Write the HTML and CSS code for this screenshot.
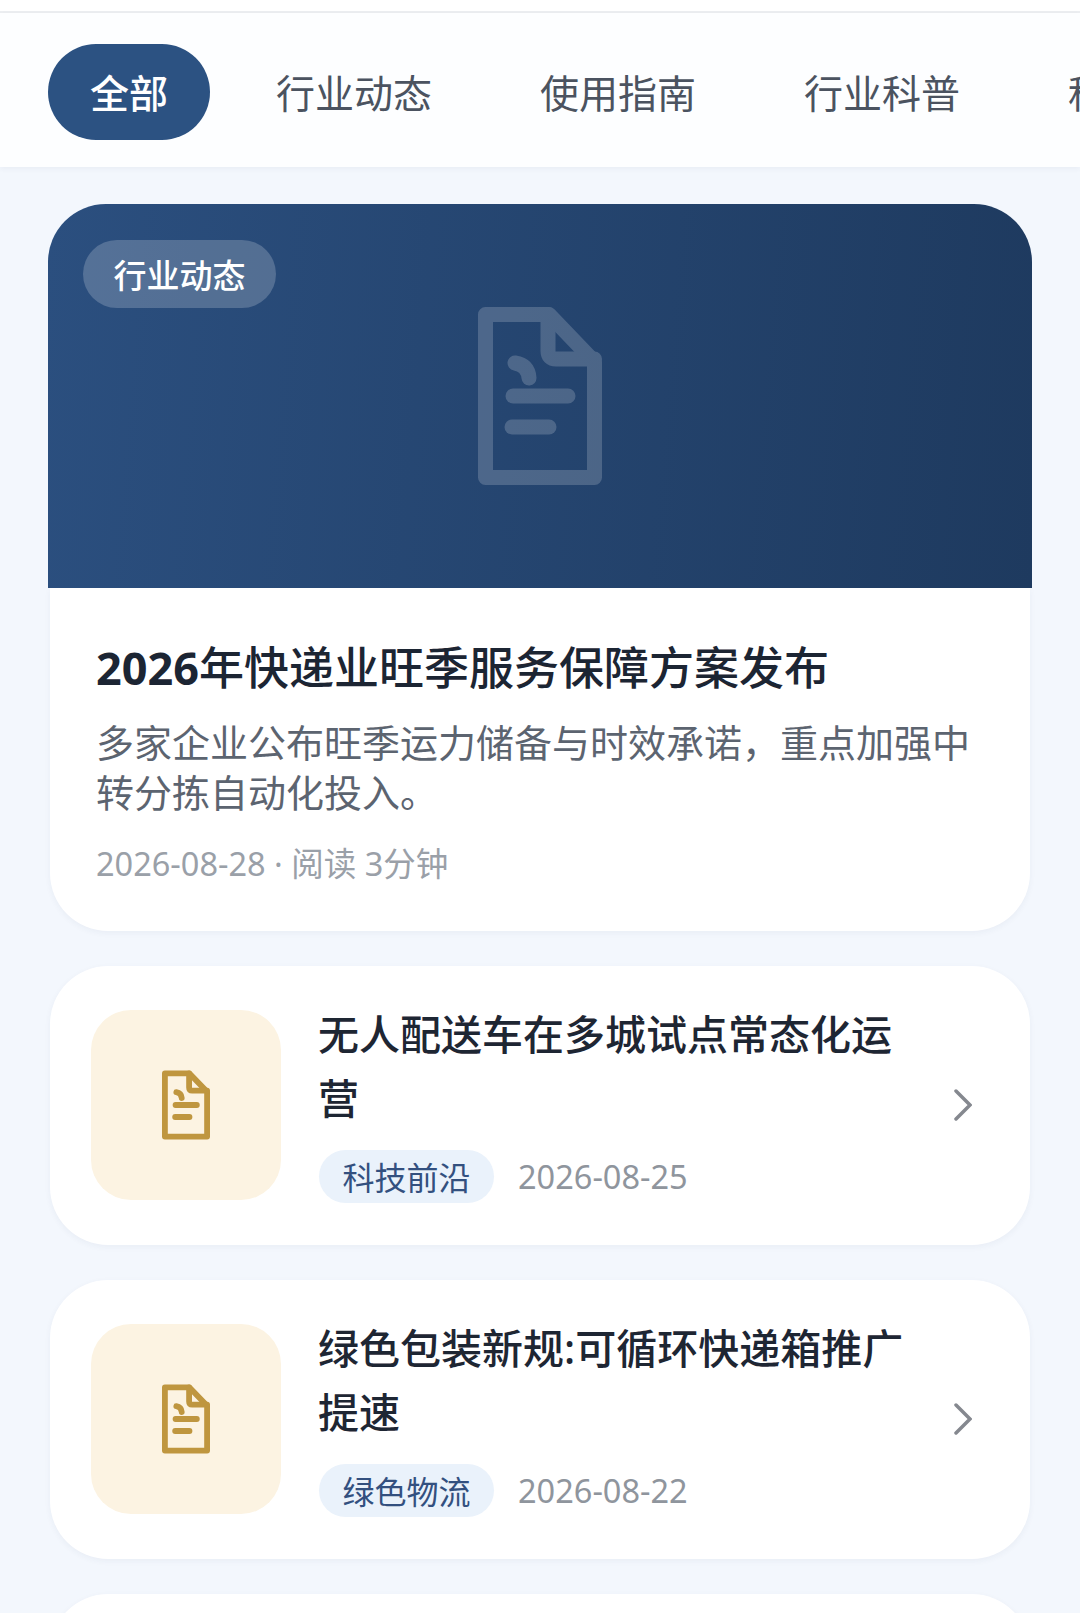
FILE: index.html
```html
<!DOCTYPE html>
<html lang="zh-CN">
<head>
  <meta charset="UTF-8" />
  <meta name="viewport" content="width=device-width, initial-scale=1.0" />
  <title>资讯</title>
  <link rel="stylesheet" href="styles.css">
</head>
<body>
  <svg class="defs" width="0" height="0">
    <symbol id="doc" viewBox="0 0 124 178">
      <path d="M7.5 7.5H71L116.5 55V170.5H7.5Z" />
      <path d="M70 7.5V44Q70 52 78 52H116.5" />
      <path d="M37 56Q50 58 51 71" />
      <path d="M35 89H90" />
      <path d="M34 120H71" />
    </symbol>
  </svg>

  <div class="top-strip"></div>

  <!-- 分类标签 -->
  <nav class="tabs">
    <span class="tab active">全部</span>
    <span class="tab">行业动态</span>
    <span class="tab">使用指南</span>
    <span class="tab">行业科普</span>
    <span class="tab">科技前沿</span>
  </nav>

  <main class="list">
    <!-- 头条 -->
    <article class="hero-card">
      <div class="hero">
        <span class="hero-tag">行业动态</span>
        <svg class="doc-icon hero-icon"><use href="#doc"></use></svg>
      </div>
      <div class="hero-body">
        <h2 class="hero-title"><b>2026</b>年快递业旺季服务保障方案发布</h2>
        <p class="hero-desc">多家企业公布旺季运力储备与时效承诺，重点加强中转分拣自动化投入。</p>
        <div class="hero-meta">2026-08-28 · 阅读 3分钟</div>
      </div>
    </article>

    <!-- 列表 -->
    <article class="item">
      <div class="thumb"><svg class="doc-icon thumb-icon"><use href="#doc"></use></svg></div>
      <div class="item-body">
        <h3 class="item-title">无人配送车在多城试点常态化运营</h3>
        <div class="item-meta">
          <span class="item-tag">科技前沿</span>
          <span class="item-date">2026-08-25</span>
        </div>
      </div>
      <svg class="chevron" viewBox="0 0 18 32"><path d="M2 2L16 16L2 30" /></svg>
    </article>

    <article class="item">
      <div class="thumb"><svg class="doc-icon thumb-icon"><use href="#doc"></use></svg></div>
      <div class="item-body">
        <h3 class="item-title">绿色包装新规:可循环快递箱推广提速</h3>
        <div class="item-meta">
          <span class="item-tag">绿色物流</span>
          <span class="item-date">2026-08-22</span>
        </div>
      </div>
      <svg class="chevron" viewBox="0 0 18 32"><path d="M2 2L16 16L2 30" /></svg>
    </article>

    <article class="item"></article>
  </main>
</body>
</html>
```

FILE: styles.css
```css
html, body {
  margin: 0;
  height: 1613px;
  overflow: hidden;
}
body {
  font-family: "Noto Sans", "Noto Sans CJK SC", sans-serif;
  background-color: #f3f7fd;
}
.defs {
  display: block;
}
.top-strip {
  height: 11px;
  background: #fff;
  border-bottom: 2px solid #eceef1;
}
.tabs {
  display: flex;
  align-items: center;
  gap: 24px;
  box-sizing: border-box;
  height: 154px;
  padding: 4px 0 0 48px;
  background: #fdfeff;
  box-shadow: 0 2px 5px rgba(40,60,100,0.05);
  overflow: hidden;
  white-space: nowrap;
}
.tab {
  flex: none;
  height: 96px;
  padding: 0 42px;
  border-radius: 48px;
  font-size: 39px;
  line-height: 98px;
  color: #4b5360;
}
.tab.active {
  background: #2c5282;
  color: #fff;
  font-weight: 500;
}
.list {
  display: flex;
  flex-direction: column;
  gap: 35px;
  padding: 37px 48px 0;
}
.doc-icon {
  display: block;
  fill: none;
  stroke-width: 15;
  stroke-linecap: round;
  stroke-linejoin: round;
}
.hero-card {
  display: flex;
  flex-direction: column;
}
.hero {
  position: relative;
  display: flex;
  align-items: center;
  justify-content: center;
  height: 384px;
  border-radius: 58px 58px 0 0;
  background: linear-gradient(95deg, #2b4f7f, #1e3a5f);
}
.hero-tag {
  position: absolute;
  left: 35px;
  top: 36px;
  height: 68px;
  padding: 0 30.5px;
  border-radius: 34px;
  background: rgba(255,255,255,0.2);
  color: #fff;
  font-size: 33px;
  font-weight: 500;
  line-height: 72px;
}
.hero-icon {
  width: 124px;
  height: 178px;
  stroke: #fff;
  opacity: 0.18;
}
.hero-body {
  margin: 0 2px;
  padding: 50px 47px 45px 46px;
  background: #fff;
  border-radius: 0 0 58px 58px;
  box-shadow: 0 2px 6px rgba(40,60,100,0.05);
}
.hero-title {
  margin: 0;
  font-size: 45px;
  line-height: 60px;
  font-weight: 500;
  color: #1c2533;
}
.hero-title b {
  font-weight: 700;
}
.hero-desc {
  margin: 19px 0 0;
  font-size: 38px;
  line-height: 50px;
  color: #5c6470;
}
.hero-meta {
  margin-top: 25px;
  font-size: 32.5px;
  line-height: 44px;
  color: #9aa0a8;
}
.item {
  display: flex;
  align-items: center;
  flex: none;
  height: 279px;
  margin: 0 2px;
  padding: 0 58px 0 41px;
  background: #fff;
  border-radius: 58px;
  box-shadow: 0 2px 6px rgba(40,60,100,0.05);
}
.thumb {
  flex: none;
  display: flex;
  align-items: center;
  justify-content: center;
  width: 190px;
  height: 190px;
  margin-bottom: 2px;
  border-radius: 40px;
  background: #fcf3e2;
}
.thumb-icon {
  width: 48px;
  height: 70px;
  stroke: #bf963f;
}
.item-body {
  flex: 1;
  min-width: 0;
  margin: 0 30px 6px 37px;
}
.item-title {
  margin: 0;
  font-size: 41px;
  line-height: 64px;
  font-weight: 500;
  color: #1e2633;
}
.item-meta {
  display: flex;
  align-items: center;
  gap: 24px;
  margin-top: 20px;
}
.item-tag {
  height: 53px;
  margin-left: 1px;
  padding: 0 23.5px;
  border-radius: 27px;
  background: #eaf2fb;
  color: #33507f;
  font-size: 32px;
  line-height: 55px;
}
.item-date {
  font-size: 32.5px;
  color: #8f959d;
}
.chevron {
  flex: none;
  width: 18px;
  height: 32px;
  margin-bottom: 2px;
  fill: none;
  stroke: #85888f;
  stroke-width: 3.5;
  stroke-linecap: round;
  stroke-linejoin: miter;
}
```
